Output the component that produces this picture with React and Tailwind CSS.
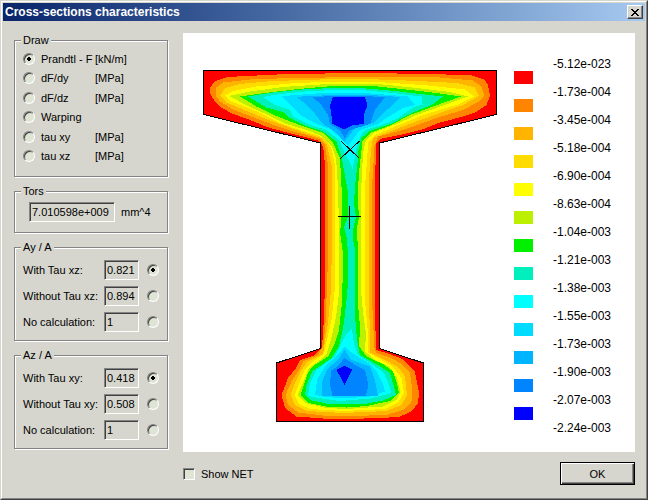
import React, { useState } from 'react'

const DRAW_OPTIONS = [
  { id: 'prandtl', label: 'Prandtl - F', unit: '[kN/m]' },
  { id: 'dfdy', label: 'dF/dy', unit: '[MPa]' },
  { id: 'dfdz', label: 'dF/dz', unit: '[MPa]' },
  { id: 'warping', label: 'Warping', unit: '' },
  { id: 'tauxy', label: 'tau xy', unit: '[MPa]' },
  { id: 'tauxz', label: 'tau xz', unit: '[MPa]' }
]

const AY_ROWS = [
  { id: 'ay-with', label: 'With Tau xz:', value: '0.821' },
  { id: 'ay-without', label: 'Without Tau xz:', value: '0.894' },
  { id: 'ay-none', label: 'No calculation:', value: '1' }
]

const AZ_ROWS = [
  { id: 'az-with', label: 'With Tau xy:', value: '0.418' },
  { id: 'az-without', label: 'Without Tau xy:', value: '0.508' },
  { id: 'az-none', label: 'No calculation:', value: '1' }
]

const SCALE = [
  { value: '-5.12e-023', color: '#ff0000' },
  { value: '-1.73e-004', color: '#ff8400' },
  { value: '-3.45e-004', color: '#ffb400' },
  { value: '-5.18e-004', color: '#ffdc00' },
  { value: '-6.90e-004', color: '#ffff00' },
  { value: '-8.63e-004', color: '#bdf000' },
  { value: '-1.04e-003', color: '#00f000' },
  { value: '-1.21e-003', color: '#00f0bd' },
  { value: '-1.38e-003', color: '#00ffff' },
  { value: '-1.55e-003', color: '#00dcff' },
  { value: '-1.73e-003', color: '#00b4ff' },
  { value: '-1.90e-003', color: '#0084ff' },
  { value: '-2.07e-003', color: '#0000ff' },
  { value: '-2.24e-003' }
]

const OUTLINE = '203.5,70.5 496.5,70.5 496.5,114.5 379.5,143 379.5,348.5 423.5,363 423.5,421.5 276.5,421.5 276.5,363 320.5,348.5 320.5,143 203.5,114.5'

// Iso bands from the outside in, each painted over the one before
const BANDS = [
  { color: '#ff8400', points: '325,73.5 287,74 227,77 215,81 210,88 210,93 215,102 222,108 232,113.5 250,120 267,127 287,132.5 303,136.5 318,140.5 322,144 323.5,150 325,165 325,240 324.5,300 324,318 322,347 315,355 300,360 296,368 288,378 281.5,395 285,408 296.5,416.5 323,418.5 344,419 383,418 400,416.5 411.5,411.5 418,403 419,393 415,372 406.5,363 401.5,358.5 388,353.5 376.5,350 376,346 374.5,300 374.5,187 376.5,143 381.5,138.5 406.5,133.5 423.5,129 440,122.5 465,116 475,112.5 486.5,105 490,95.5 488,85 485,80 470,75 396.5,73.5 340,73' },
  { color: '#ffb400', points: '360,77 290,78 250,79.5 223,82.5 215.5,88 215.5,95.5 220,101.5 233,109.5 256.5,118.5 276.5,126 293,131.5 306.5,135 320,139 325,145 328,165 328,260 325.5,323 323.5,345 318,355 303,361.5 298,371.5 291.5,381.5 285.5,395 288,405 298,412.5 323,415.5 360,416 388,414.5 403,410 411.5,401.5 412.5,391.5 410,373 403,365 391.5,358 376.5,353 374,347 374,340 372,300 372,187 374.5,146.5 378,136.5 403,130 420,124 436.5,118 463,110 478,102 484.5,95.5 481.5,86.5 473,80.5 440,77.5 390,77' },
  { color: '#ffdc00', points: '360,79.3 320,79.5 273,81 240,84 225,88 220.5,95.5 226.5,102.5 250,112.5 270,120.5 286.5,126.5 306.5,133.5 321.5,138 327,145 331.5,165 332,240 331,290 328,323 325,341 323,354 308,361.5 301.5,370 295,383 290.5,395 295,405 306.5,411 343,413 386.5,411 401.5,405 407,395 405,376.5 398,367 383,359 370,352.5 370.5,337 368.5,300 368.5,187 371,150 373,138 396.5,129 416.5,121.5 440,113 463,105 479,96 475,87.5 456.5,83 406.5,80.5 373,79.3' },
  { color: '#ffff00', points: '360,81.7 320,82 290,83.5 256.5,86.5 233,91 225,95.5 231.5,101.5 256.5,111.5 276.5,121.5 296.5,129 316.5,135 325,138.5 331.5,148.5 335,165 335.3,240 334.7,290 331.5,320 327,340 324,354 313,361.5 305,369 300,381.5 294.5,395 299,404 310,409 343,411 385,409 398,402.5 404,393 401.5,378 393,367 380,359 368,352.5 368,333 365,300 365,187 368,146.5 368,142 375,135 400,124.5 423,115 456.5,105 474.5,96.5 465,89.5 423,85 373,81.7' },
  { color: '#bdf000', points: '360,84 323,84.3 283,87 250,91.5 229,96 250,107 268,115 285,123.5 310,131 323,137 332,146.5 336,158 338,187 339.3,240 339.3,290 336,317 331.5,337 327,353 320,360 309,368 303,383 297.5,395 305,403 326.5,408 346.5,409 383,406.5 397,399.5 400.5,391.5 397,378 390,367 375,360 365,351.5 366,333 363,313 361,290 361.3,187 363,153 366,140 373,133 400,122.5 416.5,115 450,103 468,96.5 450,92 416.5,88 383,84.5' },
  { color: '#00f000', points: '360,86 333,86 298,89 265,93 240,96.5 256.5,106.5 271.5,114 290,121.5 306.5,127.5 323,133 333,143 340,158 341.5,187 341.5,217 340,233 342.5,250 342.5,283 341.5,307 339,330 335,343 328,356.5 313,366 308,373 304,385 300.5,395 308,403 326,406.5 346.5,407.5 366.5,406 390,401 399,393 397,383 393,371.5 383,364 366.5,356.5 359,346.5 360,327 358.3,307 358.3,250 356.5,230 359,217 357.5,197 359,173 361.5,150 361.5,142 370,133 390,125.5 410,115 440,104 461,96.5 436.5,93 406.5,89.5 373,86' },
  { color: '#00f0bd', points: '248,96.5 273,92.5 306.5,89 337,88 360,88 390,90.5 420,94 443,96.5 431.5,105 411.5,113 393,123 370,131 361.5,138 358,152 357.5,163 355,187 354,203 356,217 353,230 353.5,242 355,250 355,283 354.5,307 356,330 358,346 360,355 378,365 390,373 394,387 396,395 383,400.5 366.5,403.5 326.5,403.5 310,400 305,395 306.5,385 312,371.5 331.5,358 339,346.5 344,323 346.5,300 348,283 348,263 347.3,240 344,227 348,217 348,193 344.5,173 341.5,157 336.5,141.5 323,131.5 306.5,126 290,118 283,112 266.5,107.5 256.5,101.5' },
  { color: '#00ffff', points: '263,97 280,94 310,91 337,90 360,90 393,93 421.5,96.5 422.5,104.5 413,107.5 398,118 383,124.5 365,130 360,137 356,150 352.7,169 350,163 346.5,157 342.5,148 339,140 326.5,130 310,125 293,116.5 290,110 275,105' },
  { color: '#00ffff', points: '352,329 354,343 358,355 373,365 384,373 389,385 391.5,393 370,398.5 340,401 318,398 308,396 310,383 316.5,370 335,356.5 341.5,343 347,333' },
  { color: '#00dcff', points: '281.5,96.5 290,95.5 323,93 340,92.7 365,93 390,95 408,96.5 415,105 403,108 386.5,118 378,124 360,130 354,138 348,146 340.5,138 330,129 316.5,124 300,115 291.5,106.5' },
  { color: '#00dcff', points: '345,346 350,351.5 368,363 377,371.5 382.5,383 385,391.5 370,396.5 343,398.5 323,396.5 315,395 317,380 325,366.5 340,353' },
  { color: '#00b4ff', points: '296.5,97 306.5,96 336.5,95 370,95 400,97 393,105 383,113 373,123 355,128 344.5,142 335,131.5 323,124 313,111.5 305,103.5' },
  { color: '#00b4ff', points: '344.5,349.5 351.5,360 370,366.5 375,380 378,395.5 321.5,395.5 321.5,383 328,368 338,360' },
  { color: '#0084ff', points: '312.5,97 335,96 360,96 385,97 375,110 370,124 350,130 344.5,138 340,130 330,124 328,115 321.5,105' },
  { color: '#0084ff', points: '344.5,358 356.5,366 365,370 368.5,385 366,395.5 332.5,395.5 330,385 331,370.5 338,366' },
  { color: '#0000ff', points: '333,97 365,97 367.5,105 364.5,113 364,124 353,125 344.5,129.5 332.5,124 330,105' },
  { color: '#0000ff', points: '344.5,365.5 352,369.5 344.5,384.5 336.5,370' }
]

function GroupBox({ title, className, children }) {
  return (
    <fieldset className={`min-w-0 border border-[#848484] px-2 shadow-[1px_1px_0_#fff,inset_1px_1px_0_#fff] ${className}`}>
      <legend className="-ml-0.5 bg-[#d6d6ce] px-0.5">{title}</legend>
      {children}
    </fieldset>
  )
}

function Radio(props) {
  return (
    <input
      type="radio"
      className="size-3 shrink-0 appearance-none rounded-full border border-[#808080] border-r-white border-b-white bg-[#dee5d5] shadow-[inset_1px_1px_0_#404040] checked:bg-[radial-gradient(circle,#000_2px,#dee5d5_2px)]"
      {...props}
    />
  )
}

function ValueBox({ className, ...props }) {
  return (
    <input
      type="text"
      readOnly
      className={`h-5 border border-[#848484] border-r-white border-b-white bg-[#d6d6ce] px-0.5 shadow-[inset_1px_1px_0_#404040] outline-none ${className}`}
      {...props}
    />
  )
}

function AreaGroup({ title, name, rows }) {
  const [selected, setSelected] = useState(rows[0].id)
  return (
    <GroupBox title={title} className="pt-1.5 pb-2">
      <div className="flex flex-col gap-1.5">
        {rows.map(r => (
          <div key={r.id} className="flex items-center">
            <label htmlFor={r.id} className="flex-1 whitespace-nowrap">{r.label}</label>
            <ValueBox className="w-[35px]" value={r.value} aria-label={`${title} ${r.label}`} />
            <span className="ml-2 flex">
              <Radio id={r.id} name={name} checked={selected === r.id} onChange={() => setSelected(r.id)} />
            </span>
          </div>
        ))}
      </div>
    </GroupBox>
  )
}

function SectionPlot() {
  return (
    <svg viewBox="183 33 331 419" className="min-w-0 flex-1" shapeRendering="crispEdges" role="img">
      <polygon points={OUTLINE} fill="#ff0000" />
      {BANDS.map((b, i) => (
        <polygon key={i} points={b.points} fill={b.color} />
      ))}
      <polygon points={OUTLINE} fill="none" stroke="#000" />
      {/* shear centre and centroid */}
      <path d="M341 141 L359.5 158.5 M359.5 141 L340.5 158.5" stroke="#000" />
      <path d="M338 216.5 H361 M349.5 206 V229" stroke="#000" />
    </svg>
  )
}

function ScaleLegend() {
  return (
    <ul className="mt-6 mr-[22px] w-[99px] shrink-0 text-xs leading-[14px]">
      {SCALE.map(s => (
        <li key={s.value} className="flex flex-col">
          <span className="pl-[39px]">{s.value}</span>
          {s.color && <span className="mb-px h-[13px] w-[19px]" style={{ backgroundColor: s.color }} />}
        </li>
      ))}
    </ul>
  )
}

export default function App() {
  const [draw, setDraw] = useState('prandtl')
  const [showNet, setShowNet] = useState(false)

  return (
    <div className="min-h-screen border border-[#d6d6ce] border-r-[#404040] border-b-[#404040] bg-[#d6d6ce] font-['Liberation_Sans',Arial,sans-serif] text-[11px] leading-[14px] text-black">
      <div className="flex min-h-[498px] flex-col border border-white border-r-[#848484] border-b-[#848484] p-px">
        <header className="flex h-[18px] items-center justify-between bg-linear-to-r from-[#0a246a] to-[#a6caf0] pr-0.5 pl-0.5">
          <h1 className="text-xs font-bold text-white">Cross-sections characteristics</h1>
          <button
            type="button"
            aria-label="Close"
            className="flex h-3.5 w-4 items-center justify-center border border-white border-r-[#404040] border-b-[#404040] bg-[#d6d6ce] shadow-[inset_-1px_-1px_0_#848484]"
          >
            <svg viewBox="0 0 8 7" className="h-[7px] w-2" shapeRendering="crispEdges">
              <path d="M0 0h2v1h1v1h2v-1h1v-1h2v1h-1v1h-1v1h-1v1h1v1h1v1h1v1h-2v-1h-1v-1h-2v1h-1v1h-2v-1h1v-1h1v-1h1v-1h-1v-1h-1v-1h-1z" />
            </svg>
          </button>
        </header>

        <main className="flex flex-1 gap-[15px] pt-3 pr-2.5 pb-3 pl-[11px]">
          <aside className="flex w-[154px] shrink-0 flex-col gap-[7px]">
            <GroupBox title="Draw" className="pt-0.5 pb-2.5">
              <div className="grid h-[117px] grid-rows-6">
                {DRAW_OPTIONS.map(o => (
                  <label key={o.id} className="flex items-center">
                    <Radio name="draw" checked={draw === o.id} onChange={() => setDraw(o.id)} />
                    <span className="ml-1.5 w-[54px] whitespace-nowrap">{o.label}</span>
                    <span>{o.unit}</span>
                  </label>
                ))}
              </div>
            </GroupBox>

            <GroupBox title="Tors" className="pt-1 pb-2.5">
              <div className="ml-1.5 flex items-center gap-1.5">
                <ValueBox id="tors" className="w-[86px]" value="7.010598e+009" />
                <label htmlFor="tors">mm^4</label>
              </div>
            </GroupBox>

            <AreaGroup title="Ay / A" name="ay" rows={AY_ROWS} />
            <AreaGroup title="Az / A" name="az" rows={AZ_ROWS} />
          </aside>

          <section className="flex min-w-0 flex-1 flex-col gap-2.5">
            <div className="flex items-start bg-white">
              <SectionPlot />
              <ScaleLegend />
            </div>
            <div className="flex items-center justify-between">
              <label className="flex items-center gap-1.5">
                <input
                  type="checkbox"
                  checked={showNet}
                  onChange={e => setShowNet(e.target.checked)}
                  className="size-3 appearance-none border border-[#848484] border-r-white border-b-white bg-[#dee5d5] shadow-[inset_1px_1px_0_#404040] checked:bg-[#404040]"
                />
                Show NET
              </label>
              <button type="button" className="h-[23px] w-[75px] border border-black bg-[#d6d6ce] shadow-[inset_1px_1px_0_#fff,inset_-1px_-1px_0_#404040,inset_-2px_-2px_0_#848484]">
                OK
              </button>
            </div>
          </section>
        </main>
      </div>
    </div>
  )
}
